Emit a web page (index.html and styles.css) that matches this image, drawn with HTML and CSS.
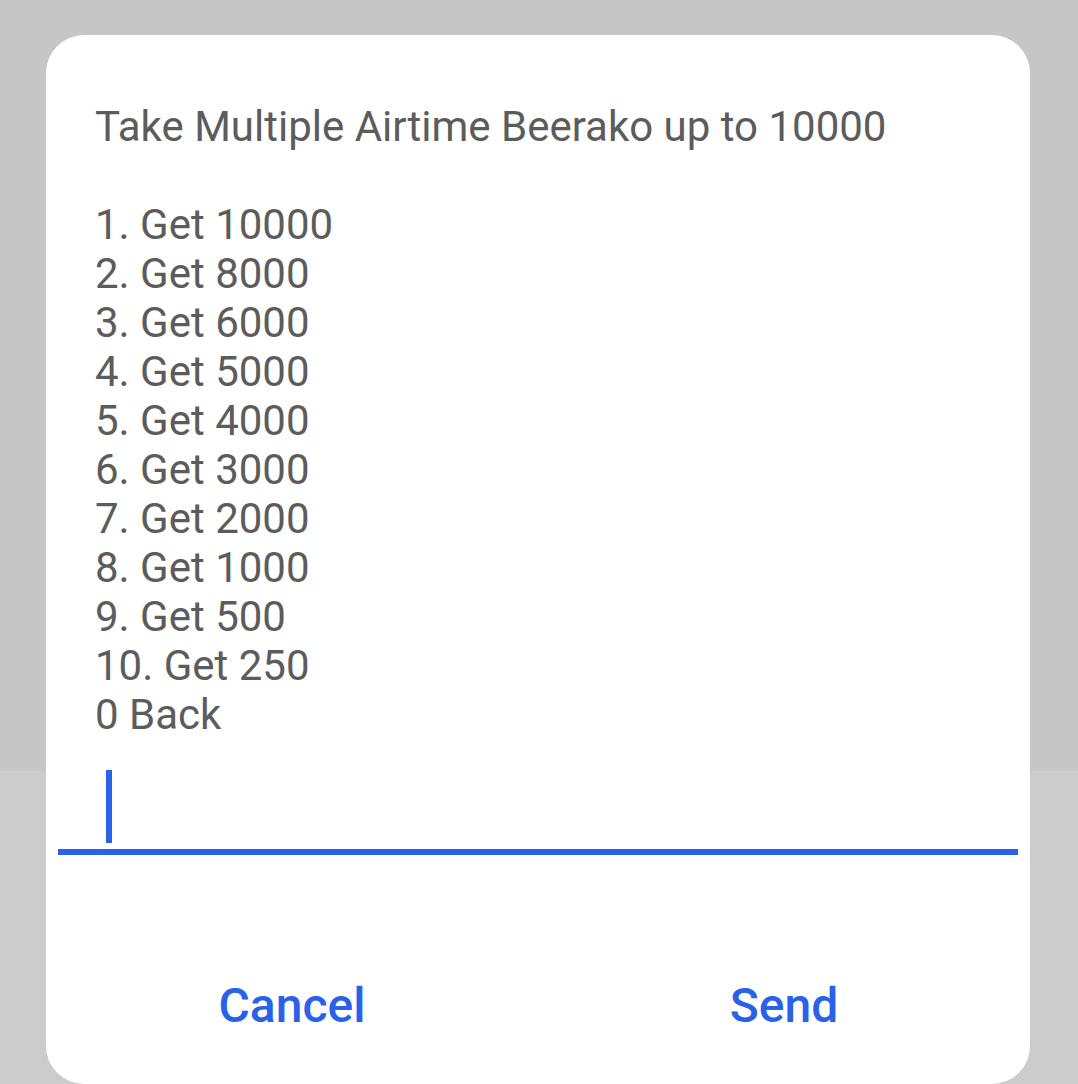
FILE: index.html
```html
<!DOCTYPE html>
<html>
<head>
<meta charset="utf-8">
<link rel="stylesheet" href="styles.css">
</head>
<body>
<div class="screen">
  <div class="backdrop-top"></div>
  <div class="backdrop-bottom"></div>
  <div class="dialog">
    <div class="message">
      <div class="line">Take Multiple Airtime Beerako up to 10000</div>
      <div class="line">&nbsp;</div>
      <div class="line">1. Get 10000</div>
      <div class="line">2. Get 8000</div>
      <div class="line">3. Get 6000</div>
      <div class="line">4. Get 5000</div>
      <div class="line">5. Get 4000</div>
      <div class="line">6. Get 3000</div>
      <div class="line">7. Get 2000</div>
      <div class="line">8. Get 1000</div>
      <div class="line">9. Get 500</div>
      <div class="line">10. Get 250</div>
      <div class="line">0 Back</div>
    </div>
    <div class="input">
      <span class="cursor"></span>
    </div>
    <div class="actions">
      <div class="btn">Cancel</div>
      <div class="btn">Send</div>
    </div>
  </div>
</div>
</body>
</html>
```

FILE: styles.css
```css
html, body {
  margin: 0;
  padding: 0;
}
body {
  width: 1078px;
  height: 1084px;
  overflow: hidden;
  font-family: Roboto, "Liberation Sans", sans-serif;
}
.screen {
  position: relative;
  width: 1078px;
  height: 1084px;
  display: flex;
  flex-direction: column;
}
.backdrop-top {
  height: 771px;
  background: #c6c6c6;
}
.backdrop-bottom {
  flex: 1;
  background: #cccccc;
}
.dialog {
  position: absolute;
  left: 46px;
  top: 35px;
  width: 984px;
  height: 1049px;
  background: #ffffff;
  border-radius: 38px;
  display: flex;
  flex-direction: column;
}
.message {
  padding: 67px 0 0 49px;
  color: #5c5c5c;
  font-size: 42px;
  line-height: 49px;
}
.line {
  white-space: pre;
}
.input {
  margin: 31px 12px 0 12px;
  height: 85px;
  border-bottom: 6px solid #2962e8;
  box-sizing: border-box;
  position: relative;
}
.cursor {
  position: absolute;
  left: 48px;
  top: 0;
  width: 6px;
  height: 73px;
  background: #2962e8;
}
.actions {
  display: flex;
  margin-top: 124px;
}
.btn {
  flex: 1;
  text-align: center;
  color: #2962e8;
  font-size: 48px;
  font-weight: 500;
  line-height: 54px;
}
```
